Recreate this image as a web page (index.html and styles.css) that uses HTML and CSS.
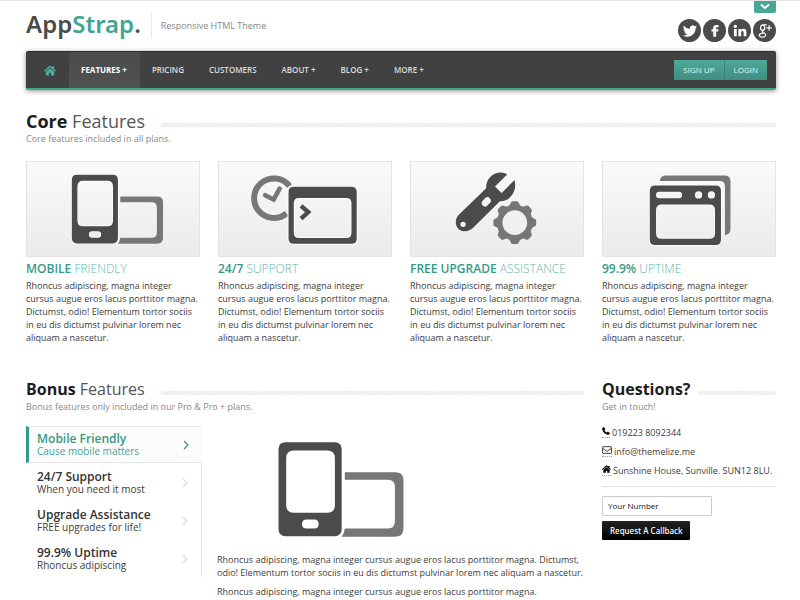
FILE: index.html
```html
<!DOCTYPE html>
<html lang="en">
<head>
<meta charset="utf-8">
<meta name="viewport" content="width=device-width, initial-scale=1">
<title>AppStrap - Responsive HTML Theme</title>
<link rel="stylesheet" href="styles.css">
</head>
<body>
<svg class="sprite" aria-hidden="true">
  <symbol id="home" viewBox="0 0 26 22">
    <path d="M13 0 0 11.500l2 2.300L13 4.200l11 9.600 2-2.300-4-3.500V2h-4v2.500z"/>
    <path d="M13 6 4 13.500V22h7v-6h4v6h7v-8.500z"/>
  </symbol>
  <symbol id="chevron" viewBox="0 0 6 10"><path d="M1 1l4 4-4 4" fill="none" stroke="currentColor" stroke-width="1.300"/></symbol>
  <symbol id="devices" viewBox="151 54 283 215">
    <path d="M301 123H413Q431 123 431 141V248Q431 266 413 266H294Q300 258 301 248H396Q412 248 412 232V156Q412 140 396 140H301z" fill="#777" stroke="#fff" stroke-width="3" paint-order="stroke"/>
    <path fill-rule="evenodd" d="M170 57H278Q294 57 294 73V249Q294 265 278 265H170Q154 265 154 249V73Q154 57 170 57zM188 75Q171 75 171 92V196Q171 213 188 213H262Q279 213 279 196V92Q279 75 262 75zM216 228Q206 228 206 238T216 248H233Q243 248 243 238T233 228z" fill="#4b4b4b" stroke="#fff" stroke-width="4" paint-order="stroke"/>
  </symbol>
</svg>

<div class="page">
  <header class="header">
    <a class="brand" href="#">App<span>Strap</span>.</a>
    <p class="slogan">Responsive HTML Theme</p>
    <div class="corner">
      <button class="toggle" type="button" aria-label="Open panel"><svg viewBox="0 0 10 7"><path d="M1 1.500l4 3.500 4-3.500" fill="none" stroke="#fff" stroke-width="2"/></svg></button>
      <nav class="social" aria-label="Social links">
        <a href="#" aria-label="Twitter"><svg viewBox="0 0 24 24"><path d="M24 4.600a10 10 0 0 1-2.800.8 5 5 0 0 0 2.200-2.700c-1 .6-2 1-3.100 1.200a4.900 4.900 0 0 0-8.400 4.500C7.700 8.100 4.100 6.100 1.700 3.100a4.900 4.900 0 0 0 1.500 6.600c-.8 0-1.600-.3-2.200-.6 0 2.300 1.600 4.400 3.900 4.900a5 5 0 0 1-2.200.1 4.900 4.900 0 0 0 4.600 3.400A9.900 9.900 0 0 1 0 19.500 14 14 0 0 0 7.500 21.700c9.100 0 14-7.500 14-14v-.6A10 10 0 0 0 24 4.600z"/></svg></a>
        <a href="#" aria-label="Facebook"><svg viewBox="0 0 24 24"><path d="M9 22V13H6V9h3V6.500C9 3 11 1.500 14.300 1.500H18v4h-2.300C14.300 5.500 14 6 14 7V9h4l-.6 4H14v9z"/></svg></a>
        <a href="#" aria-label="LinkedIn"><svg viewBox="0 0 24 24"><circle cx="4" cy="4" r="2.800"/><path d="M1.600 8.500h4.800V21H1.600zM9.200 8.500h4.600v1.900c.8-1.400 2.400-2.300 4.300-2.300 4 0 4.900 2.700 4.900 6.200V21h-4.800v-5.800c0-1.700-.2-3.100-2-3.100s-2.200 1.400-2.200 3V21H9.200z"/></svg></a>
        <a href="#" aria-label="Google Plus"><svg viewBox="0 0 24 24"><g fill="none" stroke="#fff" stroke-width="2"><ellipse cx="8" cy="6.500" rx="3.600" ry="4.500"/><path d="M7 1.500h8M9 11q-3 2 0 3.500c7 3.500 4 8-1 8s-7.500-3-4.500-5.500q2-1.500 6-1.500M19 2v9M14.500 6.500h9"/></g></svg></a>
      </nav>
    </div>
  </header>

  <nav class="navbar" aria-label="Main">
    <a class="nav-home" href="#" aria-label="Home"><svg><use href="#home"/></svg></a>
    <a class="active" href="#">FEATURES +</a>
    <a href="#">PRICING</a>
    <a href="#">CUSTOMERS</a>
    <a href="#">ABOUT +</a>
    <a href="#">BLOG +</a>
    <a href="#">MORE +</a>
    <div class="account"><a href="#">SIGN UP</a><a href="#">LOGIN</a></div>
  </nav>

  <main>
    <section class="core">
      <div class="title large"><h2><b>Core</b> Features</h2></div>
      <p class="sub">Core features included in all plans.</p>
      <div class="grid">
        <article class="feature">
          <div class="thumb"><svg viewBox="18 18 522 285"><use href="#devices" x="151" y="54" width="283" height="215"/></svg></div>
          <h3><b>MOBILE</b> FRIENDLY</h3>
          <p>Rhoncus adipiscing, magna integer cursus augue eros lacus porttitor magna. Dictumst, odio! Elementum tortor sociis in eu dis dictumst pulvinar lorem nec aliquam a nascetur.</p>
        </article>
        <article class="feature">
          <div class="thumb"><svg viewBox="24 18 522 285">
            <g fill="none" stroke="#777"><path d="M238 91A60 60 0 1 0 229 174" stroke-width="18"/><path d="M164 119l26 13 18-33" stroke-width="14" stroke-linecap="round"/></g>
            <path fill-rule="evenodd" d="M251 93H426Q442 93 442 109V250Q442 266 426 266H251Q235 266 235 250V109Q235 93 251 93zM267 127Q251 127 251 143V233Q251 249 267 249H410Q426 249 426 233V143Q426 127 410 127z" fill="#4b4b4b" stroke="#fff" stroke-width="6" paint-order="stroke"/>
            <path d="M273 151l22 19-22 20" fill="none" stroke="#4b4b4b" stroke-width="13"/>
          </svg></div>
          <h3><b>24/7</b> SUPPORT</h3>
          <p>Rhoncus adipiscing, magna integer cursus augue eros lacus porttitor magna. Dictumst, odio! Elementum tortor sociis in eu dis dictumst pulvinar lorem nec aliquam a nascetur.</p>
        </article>
        <article class="feature">
          <div class="thumb"><svg viewBox="30 18 522 285">
            <path fill-rule="evenodd" d="M322 56L285 92 305 112 344 73C355 110 325 140 300 137L218 218C200 235 175 230 168 212C163 198 167 187 175 178L258 98C256 65 290 38 322 56zM257 126L247 136Q241 143 248 150T262 150L270 142Q276 135 269 128T257 126zM188 199A8 8 0 1 0 188 215A8 8 0 1 0 188 199z" fill="#4b4b4b" stroke="#fff" stroke-width="4" paint-order="stroke"/>
            <g fill="#777"><circle cx="345" cy="202" r="46" fill="none" stroke="#777" stroke-width="17"/>
              <path id="tooth" d="M327 154L333 142Q334 137 339 137H351Q356 137 357 142L363 154z"/>
              <use href="#tooth" transform="rotate(45 345 202)"/><use href="#tooth" transform="rotate(90 345 202)"/><use href="#tooth" transform="rotate(135 345 202)"/><use href="#tooth" transform="rotate(180 345 202)"/><use href="#tooth" transform="rotate(225 345 202)"/><use href="#tooth" transform="rotate(270 345 202)"/><use href="#tooth" transform="rotate(315 345 202)"/></g>
          </svg></div>
          <h3><b>FREE UPGRADE</b> ASSISTANCE</h3>
          <p>Rhoncus adipiscing, magna integer cursus augue eros lacus porttitor magna. Dictumst, odio! Elementum tortor sociis in eu dis dictumst pulvinar lorem nec aliquam a nascetur.</p>
        </article>
        <article class="feature">
          <div class="thumb"><svg viewBox="21 18 522 285">
            <path d="M193 76Q195 59 212 59H390Q408 59 408 77V222Q408 238 391 240V92Q391 76 375 76z" fill="#777" stroke="#fff" stroke-width="3" paint-order="stroke"/>
            <path fill-rule="evenodd" d="M179 89H363Q379 89 379 105V254Q379 270 363 270H179Q163 270 163 254V105Q163 89 179 89zM199 147Q182 147 182 164V234Q182 251 199 251H344Q361 251 361 234V164Q361 147 344 147zM192 108Q182 108 182 118T192 128H251Q261 128 261 118T251 108zM311 107A11 11 0 1 0 311 129A11 11 0 1 0 311 107zM350 107A11 11 0 1 0 350 129A11 11 0 1 0 350 107z" fill="#4b4b4b" stroke="#fff" stroke-width="4" paint-order="stroke"/>
          </svg></div>
          <h3><b>99.9%</b> UPTIME</h3>
          <p>Rhoncus adipiscing, magna integer cursus augue eros lacus porttitor magna. Dictumst, odio! Elementum tortor sociis in eu dis dictumst pulvinar lorem nec aliquam a nascetur.</p>
        </article>
      </div>
    </section>

    <div class="grid lower">
      <section class="bonus">
        <div class="title"><h2><b>Bonus</b> Features</h2></div>
        <p class="sub">Bonus features only included in our Pro &amp; Pro + plans.</p>
        <div class="tabbed">
          <nav class="tabs" aria-label="Bonus features">
            <a class="active" href="#"><span><b>Mobile Friendly</b>Cause mobile matters</span><svg><use href="#chevron"/></svg></a>
            <a href="#"><span><b>24/7 Support</b>When you need it most</span><svg><use href="#chevron"/></svg></a>
            <a href="#"><span><b>Upgrade Assistance</b>FREE upgrades for life!</span><svg><use href="#chevron"/></svg></a>
            <a href="#"><span><b>99.9% Uptime</b>Rhoncus adipiscing</span><svg><use href="#chevron"/></svg></a>
          </nav>
          <div class="panel">
            <svg class="hero"><use href="#devices"/></svg>
            <p>Rhoncus adipiscing, magna integer cursus augue eros lacus porttitor magna. Dictumst, odio! Elementum tortor sociis in eu dis dictumst pulvinar lorem nec aliquam a nascetur.</p>
            <p>Rhoncus adipiscing, magna integer cursus augue eros lacus porttitor magna.</p>
          </div>
        </div>
      </section>

      <section class="questions">
        <div class="title short"><h2><b>Questions?</b></h2></div>
        <p class="sub">Get in touch!</p>
        <address>
          <p><abbr><svg class="phone" viewBox="0 0 14 14"><path d="M1 1.500 3.500 0 6 4 4.300 5.500q1.200 2.800 4.200 4.200L10 8l4 2.500-1.500 2.500q-1.500 1.300-4 .3Q2.500 11 .7 5.500-.2 3 1 1.500z"/></svg></abbr> 019223 8092344</p>
          <p><abbr><svg class="mail" viewBox="0 0 18 14"><path d="M2 1h14q1 0 1 1v10q0 1-1 1H2q-1 0-1-1V2q0-1 1-1zM1 4l8 5.500L17 4" fill="none" stroke="#333" stroke-width="1.700"/></svg></abbr> info@themelize.me</p>
          <p><abbr><svg class="house"><use href="#home"/></svg></abbr> Sunshine House, Sunville. SUN12 8LU.</p>
        </address>
        <form class="callback">
          <input type="text" aria-label="Your Number" value="Your Number">
          <button type="button">Request A Callback</button>
        </form>
      </section>
    </div>
  </main>
</div>
</body>
</html>
```
FILE: styles.css
```css
* { box-sizing: border-box; }

body {
  margin: 0;
  border-top: 1px solid #e4e4e4;
  background: #fff;
  color: #3c3c3c;
  font: 9px/13px "Open Sans", "Noto Sans", sans-serif;
}

h2, h3, p { margin: 0; }
a { color: inherit; text-decoration: none; }
svg { display: block; }
.sprite { position: absolute; width: 0; height: 0; }

.page { padding: 0 24px 0 26px; }

/* Header */
.header { display: flex; height: 50px; }
.brand {
  padding-top: 7px;
  color: #4b4b4b;
  font: 600 24px/32px "Noto Sans", "Open Sans", sans-serif;
}
.brand span { color: #42a594; }
.slogan {
  height: 26px;
  margin: 11px 0 0 10px;
  padding-left: 9px;
  border-left: 1px solid #e8e8e8;
  color: #888;
  line-height: 28px;
}
.corner { display: flex; flex-direction: column; align-items: flex-end; margin: -1px 0 0 auto; }
.toggle {
  display: flex;
  align-items: center;
  justify-content: center;
  width: 22px;
  height: 13px;
  padding: 0;
  border: 0;
  border-radius: 0 0 2px 2px;
  background: #48a697;
}
.toggle svg { width: 10px; height: 7px; }
.social { display: flex; gap: 2px; margin-top: 6px; }
.social a {
  display: flex;
  align-items: center;
  justify-content: center;
  width: 23px;
  height: 23px;
  border-radius: 50%;
  background: #4b4b4b;
}
.social svg { width: 14px; height: 14px; fill: #fff; }

/* Navigation bar */
.navbar {
  display: flex;
  height: 39px;
  border-top: 1px solid #2d2d2d;
  border-bottom: 2px solid #42a594;
  border-radius: 2px;
  background: #414141;
  box-shadow: 0 1px 5px rgba(0, 0, 0, .45);
  color: #ddd;
  font-size: 8px;
  font-weight: 600;
  line-height: 36px;
}
.navbar > a { padding: 0 13px 0 12px; }
.navbar > .nav-home { display: flex; align-items: center; padding: 0 13px 0 18px; color: #4bae9d; }
.nav-home svg { width: 12px; height: 11px; fill: currentColor; }
.navbar > .active { background: linear-gradient(#4b4b4b, #515151); color: #fff; font-weight: 700; }
.account {
  display: flex;
  align-self: center;
  margin-left: auto;
  margin-right: 9px;
  border-radius: 1px;
  background: linear-gradient(#4fa899, #3f8f81);
  color: #e4f4f1;
  font-weight: 400;
  line-height: 20px;
}
.account a { padding: 0 9px; }
.account a + a { border-left: 1px solid #3a8376; }

/* Section titles */
.title { display: flex; align-items: center; gap: 16px; }
.title.short { gap: 7px; }
.title::after {
  content: "";
  flex: 1;
  height: 4px;
  margin-top: 8px;
  background: repeating-linear-gradient(75deg, #ebebeb 0 1px, #f5f5f5 1px 2px);
}
h2 { color: #555; font-size: 16px; font-weight: 400; line-height: 22px; }
h2 b { color: #1d1d1d; }
.large h2 { font-size: 18px; }
.sub { color: #888; }

.core { padding-top: 20px; }
.grid { display: grid; grid-template-columns: repeat(4, minmax(0, 1fr)); column-gap: 18px; }
.core .grid { margin-top: 16px; }

/* Feature cards */
.thumb { border: 1px solid #e4e4e4; background: linear-gradient(#fafafa, #ebebeb); }
.thumb svg { width: 100%; height: auto; }
h3 { margin: 3px 0 2px; color: #5fb5a6; font-size: 12px; font-weight: 300; line-height: 17px; }
h3 b { color: #369986; font-weight: 600; }

/* Bonus features */
.lower { margin-top: 34px; }
.bonus { grid-column: span 3; }
.tabbed { display: flex; gap: 15px; margin-top: 13px; }
.tabs { flex: 0 0 176px; }
.tabs a {
  display: flex;
  align-items: center;
  justify-content: space-between;
  padding: 7px 13px 5px 11px;
  border-right: 1px solid #e6e6e6;
  font-size: 10px;
}
.tabs b { display: block; color: #333; font-size: 12px; font-weight: 600; line-height: 13px; }
.tabs svg { width: 6px; height: 10px; color: #ddd; }
.tabs .active {
  padding: 5px 13px 4px 8px;
  border: solid #e8e8e8;
  border-width: 1px 0 1px 3px;
  border-left-color: #369986;
  background: #fcfcfc;
  color: #42a594;
}
.tabs .active b, .tabs .active svg { color: #369986; }
.panel { flex: 1; min-width: 0; }
.panel p { margin-bottom: 6px; }
.panel .hero { width: 128px; height: 97px; margin: 15px 0 15px 60px; }

/* Contact column */
address { padding: 13px 0 3px; border-bottom: 1px solid #e0e0e0; font-style: normal; }
address p { display: flex; align-items: center; gap: 2px; margin-bottom: 6px; white-space: nowrap; }
abbr { padding-bottom: 2px; border-bottom: 1px dotted #999; }
.phone { width: 8px; height: 8px; }
.mail { width: 10px; height: 8px; }
.house { width: 9px; height: 8px; }
.callback { display: flex; flex-direction: column; align-items: flex-start; gap: 5px; margin-top: 9px; }
.callback input {
  width: 110px;
  height: 20px;
  padding: 0 5px;
  border: 1px solid #ccc;
  border-radius: 1px;
  color: #111;
  font: 8px "Open Sans", sans-serif;
}
.callback button {
  height: 19px;
  padding: 0 8px;
  border: 0;
  border-radius: 1px;
  background: linear-gradient(#222, #000);
  color: #fff;
  font: 500 8px "Noto Sans", sans-serif;
}
```
